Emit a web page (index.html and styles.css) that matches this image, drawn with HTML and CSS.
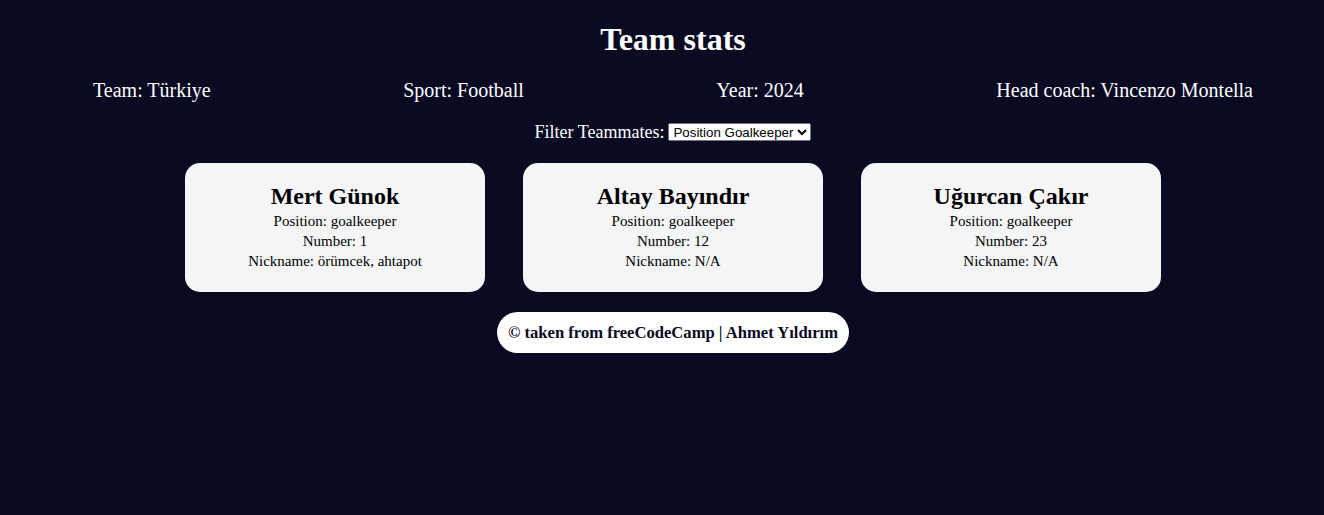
FILE: index.html
```html
<!DOCTYPE html>
<html lang="tr">
<head>
<meta charset="utf-8">
<title>Team stats</title>
<link rel="stylesheet" href="styles.css">
</head>
<body>
  <header class="header">
    <h1 class="title">Team stats</h1>
    <div class="team-stats">
      <p class="stat">Team: <span>Türkiye</span></p>
      <p class="stat">Sport: <span>Football</span></p>
      <p class="stat">Year: <span>2024</span></p>
      <p class="stat">Head coach: <span>Vincenzo Montella</span></p>
    </div>
  </header>
  <main class="main">
    <div class="filter">
      <label class="filter-label" for="players">Filter Teammates:</label>
      <select class="filter-select" id="players">
        <option value="goalkeeper">Position Goalkeeper</option>
      </select>
    </div>
    <div class="cards">
      <div class="card">
        <h2 class="card-name">Mert Günok</h2>
        <p class="card-line">Position: goalkeeper</p>
        <p class="card-line">Number: 1</p>
        <p class="card-line">Nickname: örümcek, ahtapot</p>
      </div>
      <div class="card">
        <h2 class="card-name">Altay Bayındır</h2>
        <p class="card-line">Position: goalkeeper</p>
        <p class="card-line">Number: 12</p>
        <p class="card-line">Nickname: N/A</p>
      </div>
      <div class="card">
        <h2 class="card-name">Uğurcan Çakır</h2>
        <p class="card-line">Position: goalkeeper</p>
        <p class="card-line">Number: 23</p>
        <p class="card-line">Nickname: N/A</p>
      </div>
    </div>
  </main>
  <footer class="footer">
    <p class="footer-text">© taken from freeCodeCamp | Ahmet Yıldırım</p>
  </footer>
</body>
</html>
```

FILE: styles.css
```css
*, *::before, *::after {
  box-sizing: border-box;
}

html, body {
  margin: 0;
  padding: 0;
}

body {
  background-color: #0a0a23;
  color: #ffffff;
  font-family: "Liberation Serif", "Times New Roman", serif;
  text-align: center;
  padding-left: 22px;
  min-height: 515px;
}

.header {
  padding-top: 21px;
}

.title {
  margin: 0;
  font-size: 32px;
  line-height: 36px;
  font-weight: bold;
}

.team-stats {
  display: flex;
  justify-content: space-between;
  margin: 22px -22px 0 -22px;
  padding: 0 93px;
}

.stat {
  margin: 0;
  font-size: 20px;
  line-height: 23px;
}

.main {
  padding-top: 20px;
}

.filter {
  display: flex;
  justify-content: center;
  align-items: center;
  gap: 4px;
  height: 20px;
}

.filter-label {
  font-size: 18px;
  line-height: 20px;
}

.filter-select {
  font-family: Arial, "Liberation Sans", sans-serif;
  font-size: 13.33px;
  height: 18px;
}

.cards {
  display: flex;
  justify-content: center;
  gap: 38px;
  margin-top: 21px;
}

.card {
  width: 300px;
  background-color: #f4f5f7;
  color: #000000;
  border-radius: 15px;
  padding: 18px 20px 21px;
}

.card-name {
  margin: 0;
  font-size: 24px;
  line-height: 30px;
  font-weight: bold;
}

.card-line {
  margin: 0;
  font-size: 15px;
  line-height: 20px;
}

.footer {
  display: flex;
  justify-content: center;
  margin-top: 20px;
}

.footer-text {
  margin: 0;
  background-color: #ffffff;
  color: #0a0a23;
  border-radius: 21px;
  padding: 0 11px;
  height: 41px;
  line-height: 41px;
  font-size: 16.6px;
  font-weight: bold;
}
```
